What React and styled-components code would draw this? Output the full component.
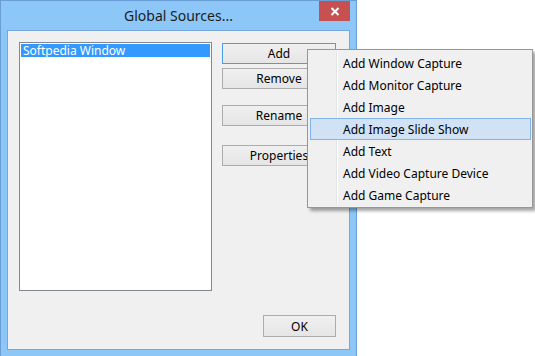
import React from 'react'
import styled, { createGlobalStyle } from 'styled-components'

const GlobalStyle = createGlobalStyle`
    body {
        margin: 0;
        background: #ffffff;
        font-family: 'Noto Sans', 'Liberation Sans', sans-serif;
    }
`

const Page = styled.div`
    position: relative;
    width: 535px;
    height: 356px;
    overflow: hidden;
`

const Window = styled.div`
    width: 357px;
    height: 357px;
    box-sizing: border-box;
    background: #8dc7f8;
    border: 1px solid #6b9ed4;
    display: flex;
    flex-direction: column;
    padding: 0 6px 6px 6px;
`

const TitleBar = styled.div`
    position: relative;
    height: 29px;
    display: flex;
    align-items: center;
    justify-content: center;
    font-size: 14px;
    color: #1c1c1c;
`

const CloseButton = styled.div`
    position: absolute;
    right: 0;
    top: 0;
    width: 31px;
    height: 20px;
    background: #c75050;
    display: flex;
    align-items: center;
    justify-content: center;
`

const Client = styled.div`
    flex: 1;
    background: #f0f0f0;
    border: 1px solid #74a6da;
    display: flex;
    flex-direction: column;
    padding: 11px 13px 12px 11px;
`

const TopRow = styled.div`
    display: flex;
    gap: 10px;
`

const ListBox = styled.div`
    width: 195px;
    height: 249px;
    box-sizing: border-box;
    background: #ffffff;
    border: 1px solid #828790;
    padding: 1px;
`

const ListItem = styled.div`
    height: 13px;
    line-height: 13px;
    font-size: 12px;
    padding-left: 2px;
    color: ${(props) => (props.selected ? '#ffffff' : '#000000')};
    background: ${(props) => (props.selected ? '#3399ff' : 'transparent')};
`

const ButtonColumn = styled.div`
    display: flex;
    flex-direction: column;
    padding-top: 1px;
`

const Button = styled.div`
    width: ${(props) => props.width || 114}px;
    height: ${(props) => props.height || 21}px;
    box-sizing: border-box;
    margin-top: ${(props) => props.gap || 0}px;
    border: 1px solid ${(props) => (props.focused ? '#4d9be4' : '#acacac')};
    background: linear-gradient(#f0f0f0, #e5e5e5);
    font-size: 12px;
    color: #000;
    display: flex;
    align-items: center;
    justify-content: center;
`

const BottomRow = styled.div`
    display: flex;
    justify-content: flex-end;
    margin-top: auto;
`

const Menu = styled.div`
    position: absolute;
    left: 307px;
    top: 49px;
    width: 226px;
    box-sizing: border-box;
    background: #f0f0f0;
    border: 1px solid #979797;
    padding: 2px 1px 1px 2px;
    box-shadow: 3px 3px 3px rgba(0, 0, 0, 0.35);
`

const Separator = styled.div`
    position: absolute;
    left: 28px;
    top: 2px;
    bottom: 2px;
    width: 1px;
    background: #e2e3e3;
    border-right: 1px solid #ffffff;
`

const MenuItem = styled.div`
    position: relative;
    height: 22px;
    box-sizing: border-box;
    padding-left: 32px;
    display: flex;
    align-items: center;
    font-size: 12px;
    color: #000;
    border: 1px solid ${(props) => (props.active ? '#80b4ea' : 'transparent')};
    background: ${(props) => (props.active ? '#d1e2f5' : 'transparent')};
`

const menuItems = [
    'Add Window Capture',
    'Add Monitor Capture',
    'Add Image',
    'Add Image Slide Show',
    'Add Text',
    'Add Video Capture Device',
    'Add Game Capture',
]

const App = () => {
    return (
        <Page>
            <GlobalStyle />
            <Window>
                <TitleBar>
                    Global Sources...
                    <CloseButton>
                        <svg width='10' height='9' viewBox='0 0 10 9'>
                            <path
                                d='M1.5 1 L8.5 8 M8.5 1 L1.5 8'
                                stroke='#ffffff'
                                strokeWidth='2'
                            />
                        </svg>
                    </CloseButton>
                </TitleBar>
                <Client>
                    <TopRow>
                        <ListBox>
                            <ListItem selected>Softpedia Window</ListItem>
                        </ListBox>
                        <ButtonColumn>
                            <Button focused>Add</Button>
                            <Button gap={4}>Remove</Button>
                            <Button gap={16}>Rename</Button>
                            <Button gap={19}>Properties</Button>
                        </ButtonColumn>
                    </TopRow>
                    <BottomRow>
                        <Button width={73} height={22}>
                            OK
                        </Button>
                    </BottomRow>
                </Client>
            </Window>
            <Menu>
                <Separator />
                {menuItems.map((item) => (
                    <MenuItem key={item} active={item === 'Add Image Slide Show'}>
                        {item}
                    </MenuItem>
                ))}
            </Menu>
        </Page>
    )
}

export default App
